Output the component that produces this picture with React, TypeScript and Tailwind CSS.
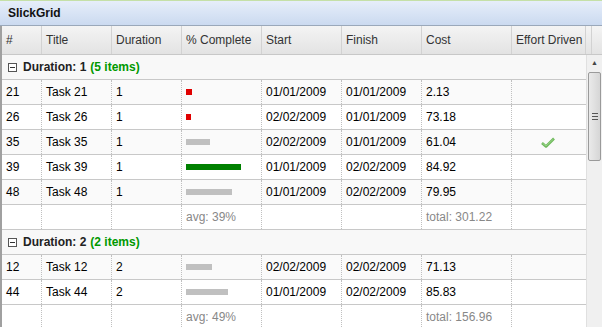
import React from 'react';

const cols = ['#', 'Title', 'Duration', '% Complete', 'Start', 'Finish', 'Cost', 'Effort Driven'];
const widths = 'grid-cols-[40px_70px_70px_80px_80px_80px_90px_74px]';

type Row = {
  id: number;
  dur: number;
  pct: number;
  color: string;
  start: string;
  finish: string;
  cost: string;
  effort?: boolean;
};

const groups: { label: string; count: number; rows: Row[]; avg: string; total: string }[] = [
  {
    label: 'Duration: 1',
    count: 5,
    avg: 'avg: 39%',
    total: 'total: 301.22',
    rows: [
      { id: 21, dur: 1, pct: 6, color: 'bg-[#e00000]', start: '01/01/2009', finish: '01/01/2009', cost: '2.13' },
      { id: 26, dur: 1, pct: 5, color: 'bg-[#e00000]', start: '02/02/2009', finish: '01/01/2009', cost: '73.18' },
      { id: 35, dur: 1, pct: 24, color: 'bg-[#c0c0c0]', start: '02/02/2009', finish: '01/01/2009', cost: '61.04', effort: true },
      { id: 39, dur: 1, pct: 55, color: 'bg-[#008000]', start: '01/01/2009', finish: '02/02/2009', cost: '84.92' },
      { id: 48, dur: 1, pct: 46, color: 'bg-[#c0c0c0]', start: '01/01/2009', finish: '02/02/2009', cost: '79.95' },
    ],
  },
  {
    label: 'Duration: 2',
    count: 2,
    avg: 'avg: 49%',
    total: 'total: 156.96',
    rows: [
      { id: 12, dur: 2, pct: 26, color: 'bg-[#c0c0c0]', start: '02/02/2009', finish: '02/02/2009', cost: '71.13' },
      { id: 44, dur: 2, pct: 42, color: 'bg-[#c0c0c0]', start: '01/01/2009', finish: '02/02/2009', cost: '85.83' },
    ],
  },
];

const Cell = ({ children, last }: { children?: React.ReactNode; last?: boolean }) => (
  <div
    className={`flex items-center h-full pl-[4px] overflow-hidden whitespace-nowrap ${
      last ? '' : 'border-r border-dotted border-r-[#c0c0c0]'
    }`}
  >
    {children}
  </div>
);

const Check = () => (
  <svg width="14" height="11" viewBox="0 0 14 11">
    <path d="M1 6 L5 9.5 L13 1.5" fill="none" stroke="#6db85a" strokeWidth="2.6" strokeLinejoin="round" />
    <path d="M1.5 6.3 L5 9 L12.5 2" fill="none" stroke="#9ad48a" strokeWidth="1" />
  </svg>
);

const GroupToggle = () => (
  <span className="inline-flex items-center justify-center w-[9px] h-[9px] border border-[#555] mr-[6px] bg-white">
    <span className="block w-[5px] h-px bg-[#333]" />
  </span>
);

export default function App() {
  return (
    <div className="w-[602px] h-[327px] overflow-hidden bg-white text-[12px] text-black font-['Liberation_Sans',Arial,sans-serif]">
      <div className="h-px bg-[#c5e0a8]" />
      <div className="h-[25px] flex items-center pl-[8px] font-bold text-[12px] text-[#111] bg-gradient-to-b from-[#e6eefa] to-[#cbdaf0] border-b border-[#9aa8ba]">
        SlickGrid
      </div>
      <div className="flex border-l-2 border-[#a0a0a0] h-[301px]">
        <div className="flex flex-col w-[584px]">
          <div className={`grid ${widths} h-[29px] shrink-0 bg-gradient-to-b from-[#f4f4f4] to-[#e3e3e3] border-b border-[#c8c8c8] text-[#333]`}>
            {cols.map((c) => (
              <div key={c} className="flex items-center pl-[4px] border-r border-[#d2d2d2] whitespace-nowrap">
                {c}
              </div>
            ))}
          </div>
          {groups.map((g) => (
            <React.Fragment key={g.label}>
              <div className="h-[25px] shrink-0 flex items-center pl-[6px] font-bold bg-[#f8f8f8] border-b border-[#c8c8c8]">
                <GroupToggle />
                <span className="text-[#222]">{g.label}</span>
                <span className="text-[#009900] ml-[4px]">({g.count} items)</span>
              </div>
              {g.rows.map((r, i) => (
                <div
                  key={r.id}
                  className={`grid ${widths} h-[25px] shrink-0 border-b border-[#c8c8c8] ${i % 2 === 0 ? 'bg-[#fafafa]' : 'bg-white'}`}
                >
                  <Cell>{r.id}</Cell>
                  <Cell>Task {r.id}</Cell>
                  <Cell>{r.dur}</Cell>
                  <Cell>
                    <div className={`h-[6px] ${r.color}`} style={{ width: r.pct }} />
                  </Cell>
                  <Cell>{r.start}</Cell>
                  <Cell>{r.finish}</Cell>
                  <Cell>{r.cost}</Cell>
                  <Cell last>
                    {r.effort && (
                      <div className="w-full flex justify-center pr-[6px]">
                        <Check />
                      </div>
                    )}
                  </Cell>
                </div>
              ))}
              <div className={`grid ${widths} h-[25px] shrink-0 border-b border-[#c8c8c8] bg-white text-[#888]`}>
                <Cell />
                <Cell />
                <Cell />
                <Cell>{g.avg}</Cell>
                <Cell />
                <Cell />
                <Cell>{g.total}</Cell>
                <Cell last />
              </div>
            </React.Fragment>
          ))}
        </div>
        <div className="w-[16px] flex flex-col">
          <div className="h-[29px] shrink-0 bg-gradient-to-b from-[#f4f4f4] to-[#e3e3e3] border-b border-[#c8c8c8]">
            <div className="w-[6px] h-full border-r border-[#d2d2d2]" />
          </div>
          <div className="flex-1 flex flex-col bg-[#f0f0f0] border-l border-[#e0e0e0]">
            <div className="h-[17px] flex items-center justify-center text-[7px] text-[#444]">▲</div>
            <div className="mx-px h-[89px] rounded-[2px] border border-[#9a9a9a] bg-gradient-to-r from-[#eaeaea] to-[#d6d6d6] flex flex-col items-center justify-center gap-[2px]">
              <div className="w-[6px] h-px bg-[#555]" />
              <div className="w-[6px] h-px bg-[#555]" />
              <div className="w-[6px] h-px bg-[#555]" />
            </div>
          </div>
        </div>
      </div>
    </div>
  );
}
